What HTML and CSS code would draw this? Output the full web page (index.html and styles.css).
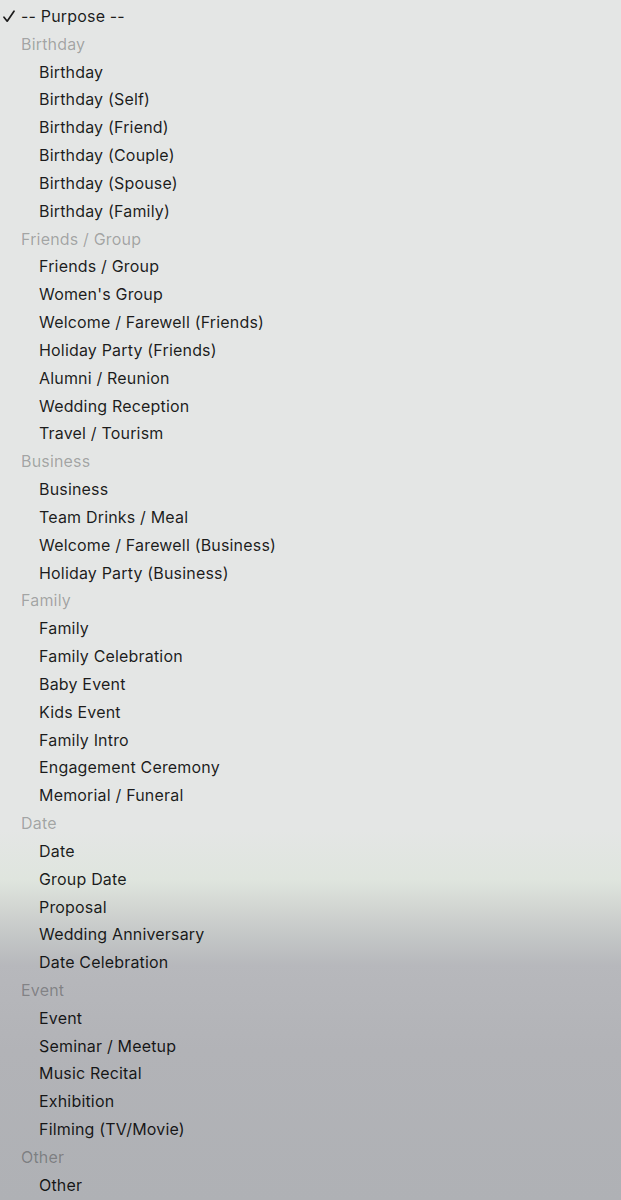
FILE: index.html
```html
<!DOCTYPE html>
<html lang="en">
<head>
    <meta charset="UTF-8">
    <meta name="viewport" content="width=device-width, initial-scale=1.0">
    <title>Purpose</title>
    <link rel="stylesheet" href="styles.css">
</head>
<body>
    <ul class="menu">
        <li class="option selected">
            <svg class="check" width="12" height="13" viewBox="0 0 12 13"><path d="M1 7.2 L4.2 11.2 L11 1.2" fill="none" stroke="#1c1c1c" stroke-width="1.7" stroke-linecap="round" stroke-linejoin="round"/></svg>
            -- Purpose --
        </li>

        <li class="group">Birthday</li>
        <li class="option">Birthday</li>
        <li class="option">Birthday (Self)</li>
        <li class="option">Birthday (Friend)</li>
        <li class="option">Birthday (Couple)</li>
        <li class="option">Birthday (Spouse)</li>
        <li class="option">Birthday (Family)</li>

        <li class="group">Friends / Group</li>
        <li class="option">Friends / Group</li>
        <li class="option">Women's Group</li>
        <li class="option">Welcome / Farewell (Friends)</li>
        <li class="option">Holiday Party (Friends)</li>
        <li class="option">Alumni / Reunion</li>
        <li class="option">Wedding Reception</li>
        <li class="option">Travel / Tourism</li>

        <li class="group">Business</li>
        <li class="option">Business</li>
        <li class="option">Team Drinks / Meal</li>
        <li class="option">Welcome / Farewell (Business)</li>
        <li class="option">Holiday Party (Business)</li>

        <li class="group">Family</li>
        <li class="option">Family</li>
        <li class="option">Family Celebration</li>
        <li class="option">Baby Event</li>
        <li class="option">Kids Event</li>
        <li class="option">Family Intro</li>
        <li class="option">Engagement Ceremony</li>
        <li class="option">Memorial / Funeral</li>

        <li class="group">Date</li>
        <li class="option">Date</li>
        <li class="option">Group Date</li>
        <li class="option">Proposal</li>
        <li class="option">Wedding Anniversary</li>
        <li class="option">Date Celebration</li>

        <li class="group">Event</li>
        <li class="option">Event</li>
        <li class="option">Seminar / Meetup</li>
        <li class="option">Music Recital</li>
        <li class="option">Exhibition</li>
        <li class="option">Filming (TV/Movie)</li>

        <li class="group">Other</li>
        <li class="option">Other</li>
    </ul>
</body>
</html>
```

FILE: styles.css
```css
html, body {
    margin: 0;
    height: 100%;
}
body {
    font-family: Inter, "Noto Sans", sans-serif;
    font-size: 16px;
    letter-spacing: 0.18px;
    background: linear-gradient(to bottom,
        #e4e6e5 0px,
        #e4e6e5 830px,
        #dfe5de 880px,
        #d3d7d3 905px,
        #c4c7c7 935px,
        #b7b8bc 965px,
        #b2b3b7 1050px,
        #afb1b5 1200px);
    min-height: 1200px;
}
.menu {
    list-style: none;
    margin: 0;
    padding: 3px 0 0 0;
}
.menu li {
    height: 27.83px;
    line-height: 27.83px;
    white-space: nowrap;
}
.option {
    padding-left: 39px;
    color: rgba(0, 0, 0, 0.88);
}
.option.selected {
    position: relative;
    padding-left: 21px;
}
.check {
    position: absolute;
    left: 3px;
    top: 7px;
}
.group {
    padding-left: 21px;
    color: rgba(0, 0, 0, 0.3);
}
```
